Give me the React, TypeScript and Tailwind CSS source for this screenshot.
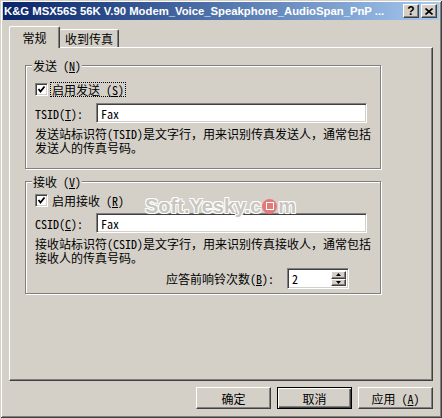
const cjk = 'font-["Noto_Sans_Mono_CJK_SC","Noto_Sans_CJK_SC",sans-serif] text-[12px] leading-[13px] text-black';

const raised =
  'bg-[#d4d0c8] border border-t-white border-l-white border-r-[#404040] border-b-[#404040] shadow-[inset_-1px_-1px_0_#808080]';
const sunken =
  'bg-white border border-t-[#808080] border-l-[#808080] border-r-white border-b-white shadow-[inset_1px_1px_0_#404040,inset_-1px_-1px_0_#d4d0c8]';

const CheckBox = () => (
  <div className={`w-[13px] h-[13px] flex items-center justify-center ${sunken}`}>
    <svg width="9" height="9" viewBox="0 0 9 9">
      <path d="M1.5 4 L3.5 6.5 L7.5 1.5" stroke="#000" strokeWidth="1.8" fill="none" />
    </svg>
  </div>
);

const Group = ({ legend, height, children }: { legend: React.ReactNode; height: string; children: React.ReactNode }) => (
  <div
    className={`relative w-[356px] ${height} border border-[#808080] shadow-[1px_1px_0_#fff,inset_1px_1px_0_#fff] pl-[9px] flex flex-col`}
  >
    <span className={`absolute left-[6px] top-[-7px] px-[1px] bg-[#d4d0c8] ${cjk}`}>{legend}</span>
    {children}
  </div>
);

const Button = ({ label, isDefault }: { label: React.ReactNode; isDefault?: boolean }) => (
  <div
    className={`w-[75px] h-[22px] flex items-center justify-center ${cjk} ${
      isDefault
        ? 'bg-[#d4d0c8] border border-black shadow-[inset_1px_1px_0_#fff,inset_-1px_-1px_0_#404040,inset_-2px_-2px_0_#808080]'
        : raised
    }`}
  >
    {label}
  </div>
);

const TitleButton = ({ children }: { children: React.ReactNode }) => (
  <div className={`w-[16px] h-[14px] flex items-center justify-center ${raised}`}>{children}</div>
);

export default function App() {
  return (
    <div className="w-[442px] h-[418px] bg-[#d4d0c8] relative overflow-hidden flex flex-col pt-[2px] px-[3px] shadow-[inset_1px_1px_0_#d4d0c8,inset_-1px_-1px_0_#404040,inset_2px_2px_0_#fff,inset_-2px_-2px_0_#808080]">
      {/* title bar */}
      <div className="h-[18px] flex items-center justify-between pl-[1px] pr-[2px] bg-gradient-to-r from-[#0a246a] to-[#a6caf0]">
        <span className='font-["Liberation_Sans",sans-serif] font-bold text-[11.3px] text-white whitespace-nowrap'>
          K&amp;G MSX56S 56K V.90 Modem_Voice_Speakphone_AudioSpan_PnP ...
        </span>
        <div className="flex gap-[2px]">
          <TitleButton>
            <span className='font-["Liberation_Sans",sans-serif] font-bold text-[12px] leading-none text-black'>?</span>
          </TitleButton>
          <TitleButton>
            <svg width="8" height="7" viewBox="0 0 8 7">
              <path d="M0.5 0.5 L7.5 6.5 M7.5 0.5 L0.5 6.5" stroke="#000" strokeWidth="1.6" />
            </svg>
          </TitleButton>
        </div>
      </div>

      <div className="flex flex-col px-[6px] mt-[6px]">
        {/* tabs */}
        <div className="h-[22px] flex items-start mb-[-1px] relative z-10">
          <div
            className={`w-[51px] h-[22px] bg-[#d4d0c8] border-l border-t border-white border-r border-r-[#404040] rounded-t-[2px] shadow-[inset_-1px_0_0_#808080] flex items-center justify-center ${cjk}`}
          >
            常规
          </div>
          <div
            className={`w-[59px] h-[18px] mt-[3px] bg-[#d4d0c8] border-t border-white border-r border-r-[#404040] rounded-t-[2px] shadow-[inset_-1px_0_0_#808080] flex items-center justify-center ${cjk}`}
          >
            收到传真
          </div>
        </div>

        {/* panel */}
        <div className="h-[334px] border border-t-white border-l-white border-r-[#404040] border-b-[#404040] shadow-[inset_-1px_-1px_0_#808080] pl-[15px] pt-[17px] flex flex-col">
          <Group
            height="h-[104px]"
            legend={
              <>
                发送 (<u>N</u>)
              </>
            }
          >
            <div className="mt-[16px] h-[14px] flex items-center">
              <CheckBox />
              <span className={`ml-[3px] px-[1px] outline-1 outline-dotted outline-black ${cjk}`}>
                启用发送 (<u>S</u>)
              </span>
            </div>
            <div className="mt-[7px] h-[20px] flex items-center">
              <span className={`w-[61px] ${cjk}`}>
                TSID(<u>T</u>):
              </span>
              <div className={`w-[271px] h-[20px] flex items-center pl-[4px] ${sunken} ${cjk}`}>Fax</div>
            </div>
            <p className={`mt-[4px] whitespace-nowrap ${cjk} leading-[14px]`}>
              发送站标识符(TSID)是文字行，用来识别传真发送人，通常包括
              <br />
              发送人的传真号码。
            </p>
          </Group>

          <div className="mt-[12px]">
            <Group
              height="h-[113px]"
              legend={
                <>
                  接收 (<u>V</u>)
                </>
              }
            >
              <div className="mt-[11px] h-[14px] flex items-center">
                <CheckBox />
                <span className={`ml-[4px] ${cjk}`}>
                  启用接收 (<u>R</u>)
                </span>
              </div>
              <div className="mt-[6px] h-[20px] flex items-center">
                <span className={`w-[61px] ${cjk}`}>
                  CSID(<u>C</u>):
                </span>
                <div className={`w-[271px] h-[20px] flex items-center pl-[4px] ${sunken} ${cjk}`}>Fax</div>
              </div>
              <p className={`mt-[4px] whitespace-nowrap ${cjk} leading-[14px]`}>
                接收站标识符(CSID)是文字行，用来识别传真接收人，通常包括
                <br />
                接收人的传真号码。
              </p>
              <div className="mt-[3px] h-[21px] flex items-center">
                <span className={`ml-[131px] w-[121px] ${cjk}`}>
                  应答前响铃次数(<u>B</u>):
                </span>
                <div className={`w-[62px] h-[21px] flex items-stretch p-[2px] ${sunken}`}>
                  <span className={`flex-1 flex items-center pl-[2px] ${cjk}`}>2</span>
                  <div className="w-[15px] flex flex-col">
                    <div className={`flex-1 flex items-center justify-center ${raised}`}>
                      <svg width="5" height="3" viewBox="0 0 5 3">
                        <path d="M2.5 0 L5 3 L0 3 Z" fill="#000" />
                      </svg>
                    </div>
                    <div className={`flex-1 flex items-center justify-center ${raised}`}>
                      <svg width="5" height="3" viewBox="0 0 5 3">
                        <path d="M0 0 L5 0 L2.5 3 Z" fill="#000" />
                      </svg>
                    </div>
                  </div>
                </div>
              </div>
            </Group>
          </div>
        </div>

        {/* buttons */}
        <div className="mt-[6px] flex justify-end gap-[6px]">
          <Button label="确定" />
          <Button label="取消" isDefault />
          <Button
            label={
              <>
                应用 (<u>A</u>)
              </>
            }
          />
        </div>
      </div>

      {/* watermark */}
      <div className="absolute left-[145px] top-[196px] flex items-center pointer-events-none">
        <span className='font-["Liberation_Sans",sans-serif] font-black text-[20px] leading-none text-[#c9c6c0] [text-shadow:1px_1px_0_#fff,-1px_-1px_0_#fff,1px_-1px_0_#fff,-1px_1px_0_#fff,0_0_2px_#888]'>
          Soft.Yesky.c
        </span>
        <span className="w-[15px] h-[15px] rounded-full bg-[#e27a7a] flex items-center justify-center mx-[1px]">
          <span className="w-[8px] h-[8px] border border-white" />
        </span>
        <span className='font-["Liberation_Sans",sans-serif] font-black text-[20px] leading-none text-[#c9c6c0] [text-shadow:1px_1px_0_#fff,-1px_-1px_0_#fff,1px_-1px_0_#fff,-1px_1px_0_#fff,0_0_2px_#888]'>
          m
        </span>
      </div>
    </div>
  );
}
